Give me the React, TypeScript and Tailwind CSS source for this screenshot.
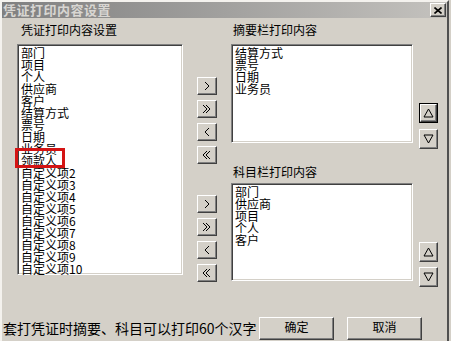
import React from "react";

const raised =
  "border border-t-white border-l-white border-r-[#404040] border-b-[#404040] shadow-[inset_-1px_-1px_0_#808080,inset_1px_1px_0_#d4d0c8] bg-[#d4d0c8]";
const sunken =
  "border border-t-[#808080] border-l-[#808080] border-r-white border-b-white shadow-[inset_1px_1px_0_#404040,inset_-1px_-1px_0_#d4d0c8] bg-white";

function Chevron({ dir, double }: { dir: "r" | "l"; double?: boolean }) {
  const one = dir === "r" ? "M1 1 L5 5 L1 9" : "M5 1 L1 5 L5 9";
  return (
    <svg width={double ? 10 : 7} height="11" viewBox={double ? "0 0 10 11" : "0 0 7 11"} className="block">
      <path d={one} fill="none" stroke="#000" strokeWidth="1" />
      {double && (
        <path
          d={dir === "r" ? "M4 1 L8 5 L4 9" : "M8 1 L4 5 L8 9"}
          fill="none"
          stroke="#000"
          strokeWidth="1"
        />
      )}
    </svg>
  );
}

function ArrowBtn({ dir, double }: { dir: "r" | "l"; double?: boolean }) {
  return (
    <div className={`${raised} w-[20px] h-[18px] flex items-center justify-center`}>
      <Chevron dir={dir} double={double} />
    </div>
  );
}

function Tri({ up }: { up?: boolean }) {
  return (
    <svg width="11" height="10" viewBox="0 0 11 10" className="block">
      <path
        d={up ? "M5.5 1 L10 9 L1 9 Z" : "M1 1 L10 1 L5.5 9 Z"}
        fill="none"
        stroke="#000"
        strokeWidth="1"
      />
    </svg>
  );
}

function UpDown({ up, focus }: { up?: boolean; focus?: boolean }) {
  if (focus) {
    return (
      <div className="w-[19px] h-[20px] border border-black">
        <div className={`${raised} w-full h-full flex items-center justify-center`}>
          <Tri up={up} />
        </div>
      </div>
    );
  }
  return (
    <div className={`${raised} w-[19px] h-[20px] flex items-center justify-center`}>
      <Tri up={up} />
    </div>
  );
}

function Items({ items }: { items: string[] }) {
  return (
    <div className="flex flex-col pt-[2px] pl-[3px]">
      {items.map((t, i) => (
        <div key={i} className="h-[12px] leading-[12px] text-[12px] whitespace-nowrap">
          {t}
        </div>
      ))}
    </div>
  );
}

export default function App() {
  const left = [
    "部门",
    "项目",
    "个人",
    "供应商",
    "客户",
    "结算方式",
    "票号",
    "日期",
    "业务员",
    "领款人",
    "自定义项2",
    "自定义项3",
    "自定义项4",
    "自定义项5",
    "自定义项6",
    "自定义项7",
    "自定义项8",
    "自定义项9",
    "自定义项10",
  ];
  const top = ["结算方式", "票号", "日期", "业务员"];
  const bottom = ["部门", "供应商", "项目", "个人", "客户"];

  return (
    <div className="relative w-[451px] h-[341px] bg-[#d4d0c8] overflow-hidden font-['Noto_Sans_CJK_SC',sans-serif] text-black">
      <div className="flex flex-col h-full w-[449px] border-l-2 border-l-[#f4f2ee] border-r-2 border-r-[#505050] border-t-2 border-t-[#f4f2ee]">
        {/* Title bar */}
        <div className="h-[16px] flex items-center justify-between bg-linear-to-r from-[#808080] to-[#c4c2be] pl-[1px] pr-[1px]">
          <span className="text-[13px] font-bold text-[#d8d6d2] leading-[16px] tracking-[0.5px]">凭证打印内容设置</span>
          <div className={`${raised} w-[16px] h-[14px] flex items-center justify-center`}>
            <svg width="8" height="7" viewBox="0 0 8 7" className="block">
              <path d="M0.5 0.5 L7.5 6.5 M7.5 0.5 L0.5 6.5" stroke="#000" strokeWidth="1.6" />
            </svg>
          </div>
        </div>

        {/* Main */}
        <div className="flex pt-[5px] pl-[15px]">
          {/* Left column */}
          <div className="flex flex-col w-[166px]">
            <div className="h-[21px] pl-[4px] text-[12px] leading-[14px]">凭证打印内容设置</div>
            <div className={`${sunken} h-[231px]`}>
              <Items items={left} />
            </div>
          </div>

          {/* Arrow buttons */}
          <div className="flex flex-col ml-[14px] w-[20px] pt-[54px]">
            <div className="flex flex-col gap-[5px]">
              <ArrowBtn dir="r" />
              <ArrowBtn dir="r" double />
              <ArrowBtn dir="l" />
              <ArrowBtn dir="l" double />
            </div>
            <div className="flex flex-col gap-[5px] mt-[31px]">
              <ArrowBtn dir="r" />
              <ArrowBtn dir="r" double />
              <ArrowBtn dir="l" />
              <ArrowBtn dir="l" double />
            </div>
          </div>

          {/* Right lists */}
          <div className="flex flex-col ml-[14px] w-[182px]">
            <div className="h-[21px] pl-[2px] text-[12px] leading-[14px]">摘要栏打印内容</div>
            <div className={`${sunken} h-[99px]`}>
              <Items items={top} />
            </div>
            <div className="h-[40px] flex items-end pb-[4px] pl-[2px] text-[12px] leading-[14px]">科目栏打印内容</div>
            <div className={`${sunken} h-[98px]`}>
              <Items items={bottom} />
            </div>
          </div>

          {/* Up / down */}
          <div className="flex flex-col ml-[6px] pt-[80px]">
            <UpDown up focus />
            <div className="mt-[6px]">
              <UpDown />
            </div>
            <div className="mt-[93px]">
              <UpDown up />
            </div>
            <div className="mt-[5px]">
              <UpDown />
            </div>
          </div>
        </div>

        {/* Bottom row */}
        <div className="mt-auto mb-[1px] flex items-end">
          <div className="w-[257px] pl-[1px] text-[14px] leading-[18px] whitespace-nowrap mb-[3px]">
            套打凭证时摘要、科目可以打印60个汉字
          </div>
          <div className={`${raised} w-[75px] h-[23px] flex items-center justify-center text-[12px] leading-[12px] pb-[3px]`}>
            确定
          </div>
          <div className={`${raised} ml-[13px] w-[75px] h-[23px] flex items-center justify-center text-[12px] leading-[12px] pb-[3px]`}>
            取消
          </div>
        </div>
      </div>

      {/* Red annotation box */}
      <div className="absolute left-[15px] top-[148px] w-[50px] h-[20px] border-[3px] border-[#d41414]" />
    </div>
  );
}
